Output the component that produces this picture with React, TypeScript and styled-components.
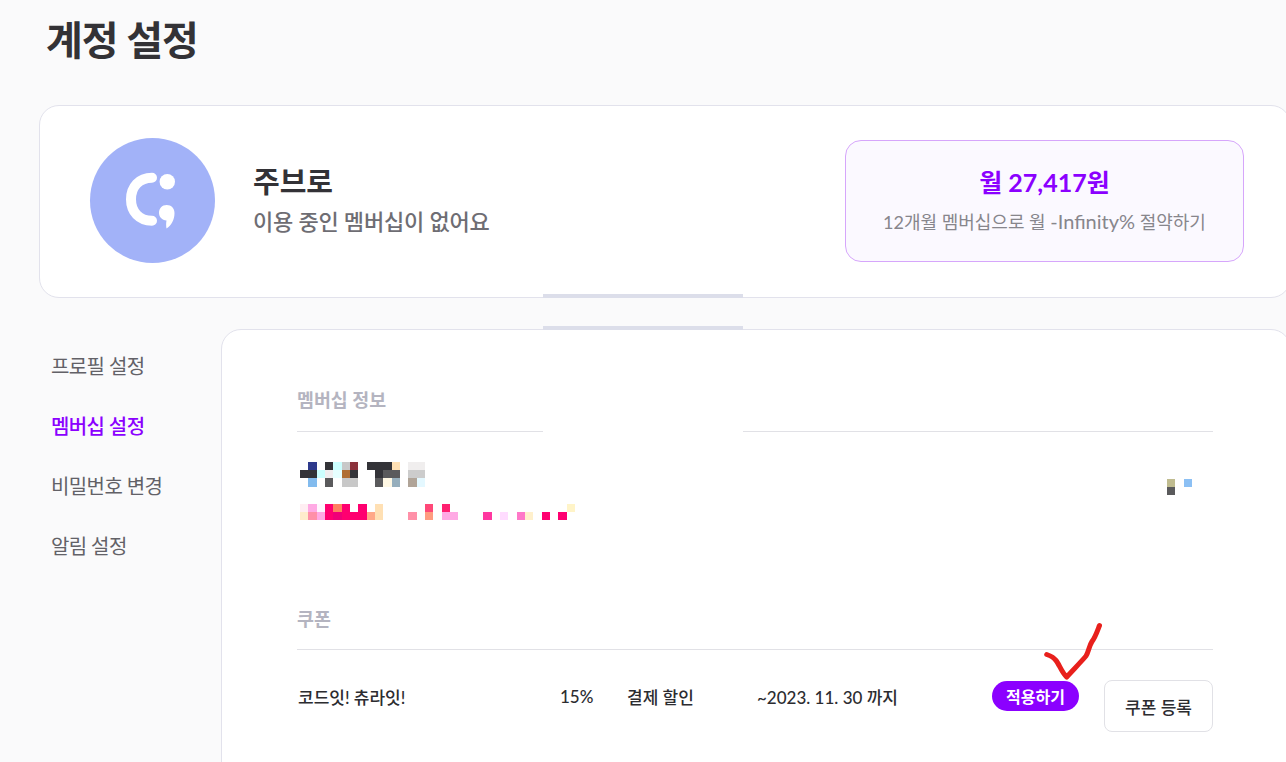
import React from 'react';
import styled, {createGlobalStyle} from 'styled-components';

const GlobalStyle = createGlobalStyle`
    html, body {
        margin: 0;
        padding: 0;
        background: #fafafb;
    }
    * {
        box-sizing: border-box;
    }
`;

const Page = styled.div`
    position: relative;
    width: 1286px;
    height: 762px;
    overflow: hidden;
    padding-left: 39px;
    background: #fafafb;
    color: #333236;
    font-family: Lato, "Noto Sans CJK KR", sans-serif;
`;

const PageTitle = styled.h1`
    height: 105px;
    margin: 0;
    padding: 15px 0 0 7px;
    font-size: 40px;
    line-height: 50px;
    font-weight: 700;
    letter-spacing: -1px;
`;

const ProfileCard = styled.section`
    display: flex;
    align-items: center;
    width: 1252px;
    height: 193px;
    padding: 0 0 2px 50px;
    background: #fff;
    border: 1px solid #e2e2ec;
    border-radius: 20px;
`;

const Avatar = styled.div`
    flex: none;
    width: 125px;
    height: 125px;
    border-radius: 50%;
    background: #a2b2f8;
`;

const ProfileText = styled.div`
    width: 630px;
    padding: 0 0 2px 38px;
`;

const ProfileName = styled.div`
    font-size: 29px;
    line-height: 40px;
    font-weight: 700;
`;

const ProfileStatus = styled.div`
    margin-top: 4px;
    font-size: 22px;
    line-height: 32px;
    font-weight: 500;
    letter-spacing: -0.2px;
    color: #6e6d73;
`;

const PriceBox = styled.div`
    display: flex;
    flex-direction: column;
    align-items: center;
    justify-content: center;
    width: 399px;
    height: 122px;
    padding-bottom: 3px;
    background: #fbf9ff;
    border: 1px solid #d6a6fb;
    border-radius: 16px;
`;

const Price = styled.div`
    font-size: 25px;
    line-height: 36px;
    font-weight: 700;
    color: #8b00ff;
`;

const PriceNote = styled.div`
    margin-top: 8px;
    font-size: 18px;
    line-height: 26px;
    color: #87868c;
`;

const LatinPart = styled.span`
    font-size: 20px;
`;

const Body = styled.div`
    display: flex;
    align-items: flex-start;
    margin-top: 31px;
`;

const SideNav = styled.nav`
    flex: none;
    display: flex;
    flex-direction: column;
    width: 182px;
    padding: 7px 0 0 12px;
`;

const NavItem = styled.div<{$active?: boolean}>`
    height: 60px;
    font-size: 20px;
    line-height: 60px;
    font-weight: ${(props) => (props.$active ? 500 : 400)};
    letter-spacing: -0.6px;
    color: ${(props) => (props.$active ? '#8b00ff' : '#626167')};
`;

const MainCard = styled.main`
    flex: none;
    width: 1070px;
    height: 520px;
    padding: 50px 0 0 75px;
    background: #fff;
    border: 1px solid #e2e2ec;
    border-radius: 20px;
`;

const Section = styled.section`
    width: 916px;
`;

const SectionTitle = styled.h2`
    height: 52px;
    margin: 0;
    padding-top: 4px;
    border-bottom: 1px solid #e1e1e6;
    font-size: 18.4px;
    line-height: 32px;
    font-weight: 700;
    color: #b4b4c0;
`;

const CouponTitle = styled(SectionTitle)`
    height: 51px;
`;

const MembershipRow = styled.div`
    display: flex;
    justify-content: space-between;
    height: 167px;
    padding-top: 30px;
`;

const CouponRow = styled.div`
    display: flex;
    align-items: center;
    height: 92px;
    font-size: 17px;
    font-weight: 500;
    color: #2c2c30;
`;

const CouponCell = styled.div<{$width: number}>`
    flex: none;
    width: ${(props) => props.$width}px;
    padding-left: 1px;
`;

const ApplyButton = styled.button`
    flex: none;
    width: 87px;
    height: 30px;
    margin: 0 25px 0 0;
    padding: 0;
    border: 0;
    border-radius: 15px;
    background: #8b00ff;
    color: #fff;
    font: 700 16px Lato, "Noto Sans CJK KR", sans-serif;
`;

const RegisterButton = styled.button`
    flex: none;
    width: 109px;
    height: 52px;
    margin-top: 20px;
    padding: 0;
    border: 1px solid #e1e1e6;
    border-radius: 8px;
    background: #fff;
    color: #2c2c30;
    font: 500 17px Lato, "Noto Sans CJK KR", sans-serif;
`;

const ScreenBar = styled.div<{$top: number; $height: number; $color: string}>`
    position: absolute;
    left: 543px;
    top: ${(props) => props.$top}px;
    width: 200px;
    height: ${(props) => props.$height}px;
    background: ${(props) => props.$color};
`;

const CheckMark = styled.svg`
    position: absolute;
    left: 1040px;
    top: 620px;
`;

type Cell = [number, number, string];

// 모자이크 칸: [열, 행, 색]
const nameCells: Cell[] = [
    [1, 0, '#2e3a8c'], [3, 0, '#333338'], [4, 0, '#ccffff'], [5, 0, '#c8c8c8'], [6, 0, '#8c323c'],
    [8, 0, '#333338'], [9, 0, '#333338'], [10, 0, '#333338'], [11, 0, '#ffe0b4'], [13, 0, '#f0eeee'], [14, 0, '#f0eeee'],
    [0, 1, '#333338'], [1, 1, '#333338'], [2, 1, '#ccffff'], [3, 1, '#f0eef0'], [4, 1, '#e6ffff'], [5, 1, '#b06e32'],
    [6, 1, '#333338'], [9, 1, '#333338'], [10, 1, '#5a5a5c'], [11, 1, '#5a5a5c'], [13, 1, '#cccccc'], [14, 1, '#cccccc'],
    [1, 2, '#82bbee'], [3, 2, '#5a5a5c'], [5, 2, '#c8c8c8'], [6, 2, '#c8c8c8'], [9, 2, '#5a5a5c'], [10, 2, '#fff8e4'],
    [11, 2, '#96aebc'], [13, 2, '#b0a498'], [14, 2, '#e4f8ff'],
];

const periodCells: Cell[] = [
    [0, 0, '#ffeef2'], [1, 0, '#ffaae4'], [2, 0, '#fff6fe'], [3, 0, '#ff0070'], [4, 0, '#ff8060'], [5, 0, '#ff0070'],
    [7, 0, '#ff0070'], [9, 0, '#ffe0b4'], [15, 0, '#ff4878'], [17, 0, '#ff2070'], [32, 0, '#fff4c8'],
    [0, 1, '#ffeccc'], [1, 1, '#ff90a8'], [2, 1, '#ffaae4'], [3, 1, '#ff0070'], [4, 1, '#f00078'], [5, 1, '#ff0070'],
    [6, 1, '#ff0070'], [7, 1, '#ff0070'], [8, 1, '#ffa888'], [9, 1, '#ffe0b4'], [13, 1, '#ff90a8'], [15, 1, '#ff9c80'],
    [17, 1, '#ffaae4'], [18, 1, '#ffaae4'], [22, 1, '#ff38a0'], [24, 1, '#ffdcff'], [26, 1, '#ff78c8'], [27, 1, '#fff0cc'],
    [29, 1, '#ff0070'], [31, 1, '#ff0070'],
];

const priceCells: Cell[] = [
    [0, 0, '#c0bc90'], [2, 0, '#8cc0f4'], [0, 1, '#5a5a5c'],
];

const Mosaic = ({cells, x, y}: {cells: Cell[]; x: number; y: number}) => (
    <>
        {cells.map(([col, row, color]) => (
            <rect
                key={`${col}-${row}`}
                x={x + (col * 8.33)}
                y={y + (row * 8.2)}
                width={8.33}
                height={8.2}
                fill={color}
                shapeRendering='crispEdges'
            />
        ))}
    </>
);

const Logo = () => (
    <svg
        width='125'
        height='125'
        viewBox='0 0 125 125'
    >
        <path
            d='M62 39.7C49 39.7 41 49 41 61.2C41 73.5 49 82.7 62 82.7'
            fill='none'
            stroke='#fff'
            strokeWidth='10'
            strokeLinecap='round'
        />
        <circle
            cx='77.3'
            cy='43.7'
            r='7.7'
            fill='#fff'
        />
        <path
            d='M76.7 67C81.5 67 84.5 70.5 84.5 75C84.5 81.5 81.5 87.5 76.5 90.5C76 88 76 85 76.5 82.4C72 82 69 79 69 74.7C69 70.5 72 67 76.7 67Z'
            fill='#fff'
        />
    </svg>
);

export default function App() {
    return (
        <Page>
            <GlobalStyle/>
            <PageTitle>{'계정 설정'}</PageTitle>
            <ProfileCard>
                <Avatar><Logo/></Avatar>
                <ProfileText>
                    <ProfileName>{'주브로'}</ProfileName>
                    <ProfileStatus>{'이용 중인 멤버십이 없어요'}</ProfileStatus>
                </ProfileText>
                <PriceBox>
                    <Price>{'월 27,417원'}</Price>
                    <PriceNote>
                        {'12개월 멤버십으로 월 '}
                        <LatinPart>{'-Infinity%'}</LatinPart>
                        {' 절약하기'}
                    </PriceNote>
                </PriceBox>
            </ProfileCard>
            <Body>
                <SideNav>
                    <NavItem>{'프로필 설정'}</NavItem>
                    <NavItem $active={true}>{'멤버십 설정'}</NavItem>
                    <NavItem>{'비밀번호 변경'}</NavItem>
                    <NavItem>{'알림 설정'}</NavItem>
                </SideNav>
                <MainCard>
                    <Section>
                        <SectionTitle>{'멤버십 정보'}</SectionTitle>
                        <MembershipRow>
                            <svg
                                width='300'
                                height='64'
                                viewBox='0 0 300 64'
                            >
                                <Mosaic
                                    cells={nameCells}
                                    x={3}
                                    y={0}
                                />
                                <Mosaic
                                    cells={periodCells}
                                    x={3}
                                    y={42}
                                />
                            </svg>
                            <svg
                                width='48'
                                height='36'
                                viewBox='0 0 48 36'
                            >
                                <Mosaic
                                    cells={priceCells}
                                    x={2}
                                    y={17}
                                />
                            </svg>
                        </MembershipRow>
                        <CouponTitle>{'쿠폰'}</CouponTitle>
                        <CouponRow>
                            <CouponCell $width={262}>{'코드잇! 츄라잇!'}</CouponCell>
                            <CouponCell $width={67}>{'15%'}</CouponCell>
                            <CouponCell $width={130}>{'결제 할인'}</CouponCell>
                            <CouponCell $width={236}>{'~2023. 11. 30 까지'}</CouponCell>
                            <ApplyButton>{'적용하기'}</ApplyButton>
                            <RegisterButton>{'쿠폰 등록'}</RegisterButton>
                        </CouponRow>
                    </Section>
                </MainCard>
            </Body>
            <ScreenBar
                $top={294}
                $height={4}
                $color='#dcdeea'
            />
            <ScreenBar
                $top={326}
                $height={4}
                $color='#dcdeea'
            />
            <ScreenBar
                $top={430}
                $height={3}
                $color='#fff'
            />
            <CheckMark
                width='64'
                height='60'
                viewBox='1040 620 64 60'
            >
                <path
                    d='M1046.7 654.5C1051 656 1054 657.5 1056 660.5C1059 664 1062 673 1066.7 677C1072 671 1081 662 1086 656C1088.5 652 1089 646 1092 641.5C1095 638 1097 632 1099.5 625.5'
                    fill='none'
                    stroke='#e8201c'
                    strokeWidth='5'
                    strokeLinecap='round'
                    strokeLinejoin='round'
                />
            </CheckMark>
        </Page>
    );
}
